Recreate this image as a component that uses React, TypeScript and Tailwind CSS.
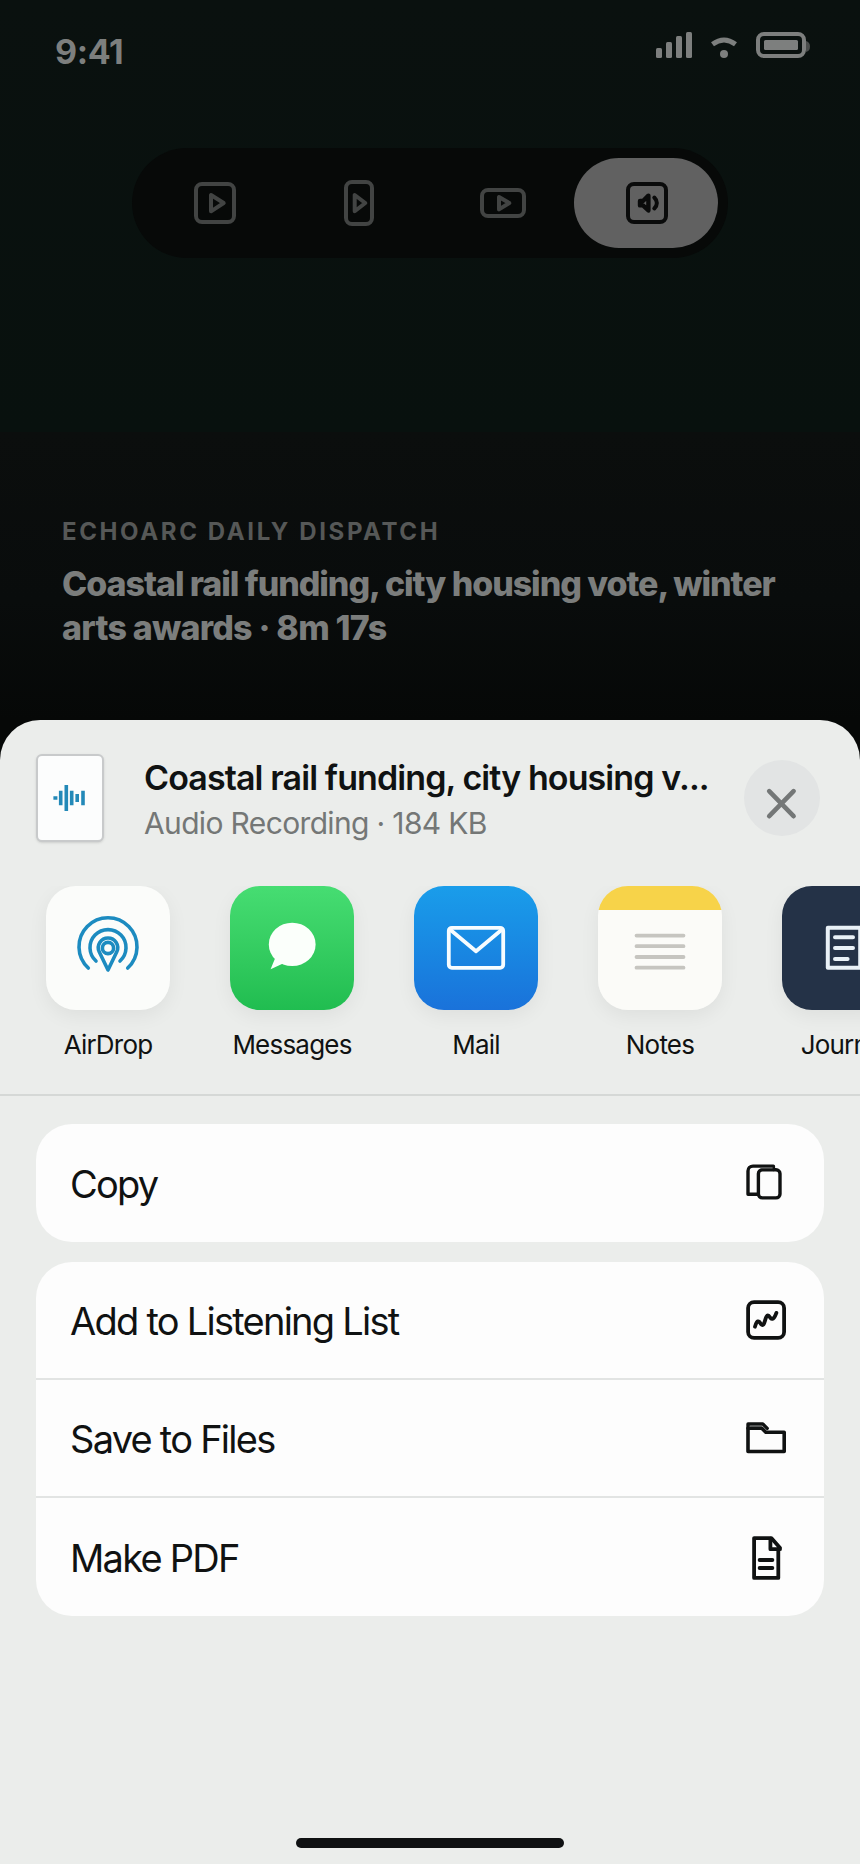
import React from 'react';

const formats = [
  {
    name: 'square',
    icon: (
      <>
        <rect x="6" y="5" width="38" height="38" rx="6" />
        <path d="M21 16v16.3L33.7 24z" />
      </>
    ),
  },
  {
    name: 'portrait',
    icon: (
      <>
        <rect x="12" y="3" width="26" height="42" rx="6" />
        <path d="M20.7 16v16.3L31.3 24z" />
      </>
    ),
  },
  {
    name: 'landscape',
    icon: (
      <>
        <rect x="4" y="11" width="42" height="26" rx="6" />
        <path d="M21 18v12.4L31.3 24z" />
      </>
    ),
  },
  {
    name: 'audio',
    icon: (
      <>
        <rect x="6" y="5" width="38" height="38" rx="6" />
        <path d="M18 22v4.4h3l5.4 5V16.6l-5.4 5.4z" strokeWidth="4.4" />
        <path d="M32.3 18.5c3.4 3.2 3.4 7.8 0 11" />
      </>
    ),
  },
];

const apps = [
  {
    name: 'AirDrop',
    tile: 'bg-[#fbfcfa]',
    icon: (
      <g fill="none" stroke="#1c8bc0" strokeWidth="3.6" strokeLinecap="round" strokeLinejoin="round">
        <path d="M42.3 82a29 29 0 1 1 39.4 0" />
        <path d="M50 75a18 18 0 1 1 24 0" />
        <path d="M62 84L53.2 65.8a9.7 9.7 0 1 1 17.6 0z" />
        <circle cx="62" cy="62" r="5.6" />
      </g>
    ),
  },
  {
    name: 'Messages',
    tile: 'bg-linear-to-b from-[#46dd72] to-[#20bd50]',
    icon: (
      <g fill="#fbfffb">
        <ellipse cx="62.2" cy="58.4" rx="23.4" ry="21.7" />
        <path d="M45.2 72L40.6 83.2L53 77.6z" />
      </g>
    ),
  },
  {
    name: 'Mail',
    tile: 'bg-linear-to-b from-[#1a9dea] to-[#1a72da]',
    icon: (
      <g fill="none" stroke="#f7fcff" strokeWidth="3.8" strokeLinejoin="round">
        <rect x="34.8" y="41.8" width="54.4" height="40" rx="3" />
        <path d="M36 43.5l26 21.7 26-21.7" />
      </g>
    ),
  },
  {
    name: 'Notes',
    tile: 'bg-[linear-gradient(#f7d349_24px,#fbfbf8_24px)]',
    icon: (
      <path d="M38.5 49.6h47M38.5 60.2h47M38.5 71h47M38.5 81.7h47" stroke="#c6c5c0" strokeWidth="3.8" strokeLinecap="round" />
    ),
  },
  {
    name: 'Journal',
    tile: 'bg-[#243247]',
    icon: (
      <g fill="none" stroke="#e9f1f7" strokeWidth="4" strokeLinejoin="round">
        <rect x="45.8" y="41.8" width="32.4" height="40" />
        <path d="M53 51.2h18M53 62h18M53 73h12.6" strokeLinecap="round" />
      </g>
    ),
  },
];

const groups = [
  [
    {
      label: 'Copy',
      icon: (
        <>
          <path d="M31.4 10.5V7.1H11a5 5 0 0 0-5 5v23.1h10" strokeWidth="3.4" />
          <rect x="16.4" y="10.7" width="21.6" height="28.2" rx="4" strokeWidth="3.4" />
          <path d="M20 8.9h10" stroke="#555757" strokeWidth="1.6" />
        </>
      ),
    },
  ],
  [
    {
      label: 'Add to Listening List',
      icon: (
        <>
          <rect x="6.1" y="6.1" width="36" height="35.8" rx="6" />
          <path d="M13 30.7c.8-3.6 2.4-6.4 4.2-5l1.8 2.4c4.4 4.6 3.6-10.4 7.6-8.4l2 2.4c2.4 2.4 4.6-1.8 5.8-5.2" strokeWidth="3.8" />
        </>
      ),
    },
    {
      label: 'Save to Files',
      icon: (
        <>
          <path d="M6 14.2V10h14.8l4.4 4.4" strokeWidth="3.4" />
          <path d="M6 14.2h13.8l4 4H42.2v19.3H6z" strokeWidth="3.6" />
          <path d="M8.6 12.1h11" stroke="#555757" strokeWidth="1.6" />
        </>
      ),
    },
    {
      label: 'Make PDF',
      icon: (
        <>
          <path d="M36.3 16v28.9H12.1V5.1h17.2l8.6 9.6" />
          <path d="M28.4 5.6v10.6h9.6M17.6 27H30.4M17.6 35H30.4" />
        </>
      ),
    },
  ],
];

function StatusBar() {
  return (
    <div className="flex h-[148px] items-start justify-between pl-[55px] pr-[48px] text-[#7d7f7e]">
      <span className="mt-[31px] text-[34px] leading-[42px] font-bold tracking-[-0.4px]">9:41</span>
      <svg className="mt-[30px]" width="158" height="32" viewBox="0 0 158 32" fill="currentColor">
        <rect x="2" y="18" width="6" height="10" rx="1.5" />
        <rect x="12" y="12" width="6" height="16" rx="1.5" />
        <rect x="22" y="6" width="6" height="22" rx="1.5" />
        <rect x="32" y="2" width="6" height="26" rx="1.5" />
        <path d="M58.5 14.2q11.5-8.4 23 0" fill="none" stroke="currentColor" strokeWidth="5" />
        <circle cx="70" cy="24" r="4" />
        <path d="M152 11q4 1 4 5.5t-4 5.5z" fill="#4a4d4c" />
        <rect x="104" y="4" width="46" height="22" rx="6" fill="none" stroke="currentColor" strokeWidth="4" />
        <rect x="110" y="10" width="34" height="10" rx="1.5" />
      </svg>
    </div>
  );
}

function FormatPicker() {
  return (
    <div className="mx-auto flex h-[110px] w-[596px] rounded-full bg-[#070908] p-[10px]">
      {formats.map((f) => (
        <button
          key={f.name}
          className={`flex h-[90px] w-[144px] items-center justify-center rounded-full ${
            f.name === 'audio' ? 'bg-[#616161] text-[#0a0b0b]' : 'text-[#424443]'
          }`}
        >
          <svg
            width="48"
            height="48"
            viewBox="0 0 48 48"
            fill="none"
            stroke="currentColor"
            strokeWidth="4"
            strokeLinecap="round"
            strokeLinejoin="round"
          >
            {f.icon}
          </svg>
        </button>
      ))}
    </div>
  );
}

function SheetHeader() {
  return (
    <div className="flex items-start pl-[36px] pr-[40px] pt-[34px]">
      <div className="h-[88px] w-[68px] shrink-0 rounded-[6px] border-2 border-[#c8cacb] bg-[#fcfdfd] shadow-sm">
        <svg width="64" height="84" viewBox="0 0 64 84" stroke="#2389b8" strokeWidth="3.6">
          <path d="M15.4 42h4M22.7 34.7v14.6M28.3 29v26M33.7 34.7v14.6M39.2 38v8M45 34.7v14.6" />
        </svg>
      </div>
      <div className="ml-[40px] mt-px w-[568px] shrink-0">
        <div className="text-[34px] leading-[46px] font-semibold tracking-[-0.9px] whitespace-nowrap text-[#101212]">
          Coastal rail funding, city housing v...
        </div>
        <div className="text-[30px] leading-[44px] tracking-[-0.65px] text-[#747776]">Audio Recording · 184 KB</div>
      </div>
      <button className="ml-auto mt-[6px] h-[76px] w-[76px] shrink-0 rounded-full bg-[#e2e4e4]">
        <svg width="76" height="76" viewBox="0 0 76 76" stroke="#747777" strokeWidth="4.6" strokeLinecap="round">
          <path d="M25.2 31.2L49.6 56.2M49.6 31.2L25.2 56.2" />
        </svg>
      </button>
    </div>
  );
}

function AppRow() {
  return (
    <div className="flex h-[208px] gap-[60px] overflow-hidden pl-[46px]">
      {apps.map((app) => (
        <div key={app.name} className="flex w-[124px] shrink-0 flex-col items-center">
          <div className={`h-[124px] w-[124px] overflow-hidden rounded-[30px] shadow-[0_6px_20px_rgba(0,0,0,0.06)] ${app.tile}`}>
            <svg width="124" height="124" viewBox="0 0 124 124">
              {app.icon}
            </svg>
          </div>
          <span className="mt-[18px] text-[26px] leading-[34px] tracking-[-0.8px] text-[#101212]">{app.name}</span>
        </div>
      ))}
    </div>
  );
}

export default function App() {
  return (
    <main className="relative flex h-[1864px] w-[860px] flex-col overflow-hidden bg-[#090b0b] font-['Inter','Liberation_Sans',sans-serif]">
      <section className="h-[720px] bg-[linear-gradient(#0a110f_0,#08110e_432px,#0b0e0d_432px,#090c0c_600px,#060807_720px)]">
        <StatusBar />
        <FormatPicker />
        <div className="px-[62px] pt-[259px]">
          <p className="text-[24px] leading-[30px] font-bold tracking-[2.62px] text-[#565857]">ECHOARC DAILY DISPATCH</p>
          <h1 className="mt-[15px] text-[34px] leading-[44px] font-extrabold whitespace-nowrap text-[#7b7d7c]">
            <span className="tracking-[-1.07px]">Coastal rail funding, city housing vote, winter</span>
            <br />
            <span className="tracking-[-0.78px]">arts awards · 8m 17s</span>
          </h1>
        </div>
      </section>

      {/* Share sheet */}
      <section className="relative flex-1 bg-[#060807]">
        <div className="flex h-full flex-col rounded-t-[40px] bg-[#ebedeb]">
          <SheetHeader />
          <div className="pt-[41px]">
            <AppRow />
          </div>
          <div className="h-[2px] bg-[#d5d8d6]" />
          <div className="mt-[28px] flex flex-col gap-[20px] px-[36px]">
            {groups.map((rows) => (
              <div key={rows[0].label} className="overflow-hidden rounded-[36px] bg-[#fdfdfd]">
                {rows.map((row) => (
                  <div
                    key={row.label}
                    className="flex h-[118px] items-center justify-between border-b-2 border-[#e2e4e3] pl-[34px] pr-[34px] last:border-b-0"
                  >
                    <span className="mt-[2px] text-[38px] leading-[48px] tracking-[-1.75px] text-[#101212]">{row.label}</span>
                    <svg
                      width="48"
                      height="48"
                      viewBox="0 0 48 48"
                      fill="none"
                      stroke="#101212"
                      strokeWidth="3.8"
                      strokeLinecap="round"
                      strokeLinejoin="round"
                    >
                      {row.icon}
                    </svg>
                  </div>
                ))}
              </div>
            ))}
          </div>
          <div className="mx-auto mt-auto mb-[16px] h-[10px] w-[268px] rounded-full bg-[#0f1112]" />
        </div>
      </section>
    </main>
  );
}
